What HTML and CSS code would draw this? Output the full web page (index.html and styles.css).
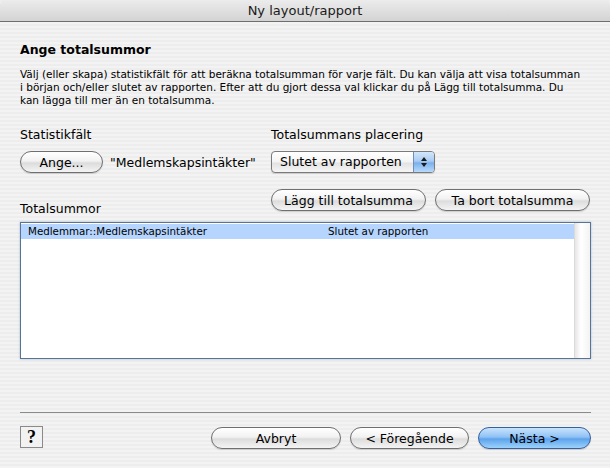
FILE: index.html
```html
<!DOCTYPE html>
<html>
<head>
    <title>Ny layout/rapport</title>
    <link rel="stylesheet" href="styles.css">
</head>
<body>
    <div class="window">
        <div class="titlebar">Ny layout/rapport</div>
        <div class="content">
            <h3 class="heading">Ange totalsummor</h3>
            <p class="intro">Välj (eller skapa) statistikfält för att beräkna totalsumman för varje fält. Du kan välja att visa totalsumman<br>i början och/eller slutet av rapporten. Efter att du gjort dessa val klickar du på Lägg till totalsumma. Du<br>kan lägga till mer än en totalsumma.</p>

            <div class="fields">
                <div class="col-left">
                    <label>Statistikfält</label>
                    <div class="field-row">
                        <button class="btn btn-ange">Ange...</button>
                        <span class="field-name">"Medlemskapsintäkter"</span>
                    </div>
                </div>
                <div class="col-right">
                    <label>Totalsummans placering</label>
                    <div class="popup">
                        <span class="popup-text">Slutet av rapporten</span>
                        <span class="popup-arrows">
                            <svg width="8" height="12" viewBox="0 0 8 12">
                                <path d="M4 1 L7 5 L1 5 Z" fill="#1a1a1a"/>
                                <path d="M4 11 L7 7 L1 7 Z" fill="#1a1a1a"/>
                            </svg>
                        </span>
                    </div>
                </div>
            </div>

            <div class="list-head">
                <label>Totalsummor</label>
                <div class="list-buttons">
                    <button class="btn btn-add">Lägg till totalsumma</button>
                    <button class="btn btn-remove">Ta bort totalsumma</button>
                </div>
            </div>

            <div class="list">
                <div class="list-rows">
                    <div class="list-row selected">
                        <span class="cell-field">Medlemmar::Medlemskapsintäkter</span>
                        <span class="cell-place">Slutet av rapporten</span>
                    </div>
                </div>
                <div class="list-scroll"></div>
            </div>

            <div class="footer">
                <button class="help">?</button>
                <div class="footer-buttons">
                    <button class="btn btn-cancel">Avbryt</button>
                    <button class="btn btn-back">&lt; Föregående</button>
                    <button class="btn btn-next">Nästa &gt;</button>
                </div>
            </div>
        </div>
    </div>
</body>
</html>
```

FILE: styles.css
```css
body {
    margin: 0;
    font-family: "DejaVu Sans", Arial, sans-serif;
    background: #ececec;
    color: #000;
}

.window {
    width: 610px;
    height: 468px;
    overflow: hidden;
    background: repeating-linear-gradient(to bottom, #ededed 0, #ededed 2px, #f3f3f3 2px, #f3f3f3 4px);
}

.titlebar {
    height: 21px;
    line-height: 21px;
    text-align: center;
    font-size: 13px;
    color: #1a1a1a;
    background: linear-gradient(to bottom, #ececec, #d3d3d3);
    border-bottom: 1px solid #6d6d6d;
    border-radius: 5px 5px 0 0;
}

.content {
    padding: 0 19px 0 20px;
}

.heading {
    margin: 20px 0 0;
    font-size: 12.5px;
    font-weight: bold;
    line-height: 16px;
}

.intro {
    margin: 10px 0 0;
    font-size: 10.5px;
    line-height: 13px;
    white-space: nowrap;
}

.fields {
    display: grid;
    grid-template-columns: 251px 1fr;
    margin-top: 20px;
}

label {
    display: block;
    font-size: 12.5px;
    line-height: 16px;
}

.field-row {
    display: flex;
    align-items: center;
    margin-top: 8px;
}

.field-name {
    font-size: 12.5px;
    margin-left: 7px;
}

.btn {
    font-family: "DejaVu Sans", Arial, sans-serif;
    font-size: 12.5px;
    height: 22px;
    padding: 0;
    border: 1px solid #6f6f6f;
    border-radius: 11px;
    background: linear-gradient(to bottom, #ffffff 0, #f2f2f2 45%, #dcdcdc 55%, #f4f4f4 100%);
    color: #000;
    box-shadow: 0 1px 1px rgba(0, 0, 0, 0.15);
}

.btn-ange {
    width: 83px;
}

.col-right .popup {
    margin-top: 8px;
}

.popup {
    display: flex;
    width: 162px;
    height: 20px;
    border: 1px solid #7a7a7a;
    border-radius: 4px;
    overflow: hidden;
    background: linear-gradient(to bottom, #ffffff 0, #f4f4f4 50%, #e2e2e2 55%, #f6f6f6 100%);
    box-shadow: 0 1px 1px rgba(0, 0, 0, 0.15);
}

.popup-text {
    flex: 1;
    font-size: 12.5px;
    line-height: 20px;
    padding-left: 8px;
}

.popup-arrows {
    width: 20px;
    display: flex;
    align-items: center;
    justify-content: center;
    border-left: 1px solid #6a8fc0;
    background: linear-gradient(to bottom, #d3e6fb 0, #a9ccf3 45%, #7cb0ec 55%, #b8dafc 100%);
}

.list-head {
    display: grid;
    grid-template-columns: 251px 1fr;
    align-items: end;
    margin-top: 16px;
}

.list-head label {
    margin-bottom: -6px;
}

.list-buttons {
    display: flex;
    gap: 9px;
}

.btn-add {
    width: 155px;
}

.btn-remove {
    width: 155px;
}

.list {
    display: flex;
    height: 135px;
    margin-top: 11px;
    border: 1px solid #5a7392;
    background: #fff;
    box-shadow: 0 0 2px rgba(80, 130, 190, 0.5);
}

.list-rows {
    flex: 1;
    padding-top: 1px;
}

.list-row {
    display: flex;
    height: 15px;
    line-height: 15px;
    font-size: 10.3px;
}

.list-row.selected {
    background: #b5d5fe;
}

.cell-field {
    width: 300px;
    padding-left: 7px;
}

.cell-place {
    padding-left: 0;
}

.list-scroll {
    width: 15px;
    background: linear-gradient(to right, #e6e6e6, #ffffff 40%, #f3f3f3);
    border-left: 1px solid #dadada;
}

.footer {
    display: flex;
    align-items: center;
    justify-content: space-between;
    margin-top: 53px;
    padding-top: 12px;
    border-top: 1px solid #8b8b8b;
}

.help {
    width: 23px;
    height: 22px;
    padding: 0;
    border: 1px solid #8a8a8a;
    background: #f2f2f2;
    font-family: "Liberation Serif", serif;
    font-weight: bold;
    font-size: 18px;
    line-height: 18px;
    margin-top: -1px;
}

.footer-buttons {
    display: flex;
    gap: 9px;
    margin-top: 2px;
}

.btn-cancel {
    width: 130px;
}

.btn-back {
    width: 119px;
}

.btn-next {
    width: 113px;
    border-color: #375f9c;
    background: linear-gradient(to bottom, #c9e3fc 0, #8fc2f5 45%, #5ea2ec 55%, #9bd3fd 100%);
}
```
